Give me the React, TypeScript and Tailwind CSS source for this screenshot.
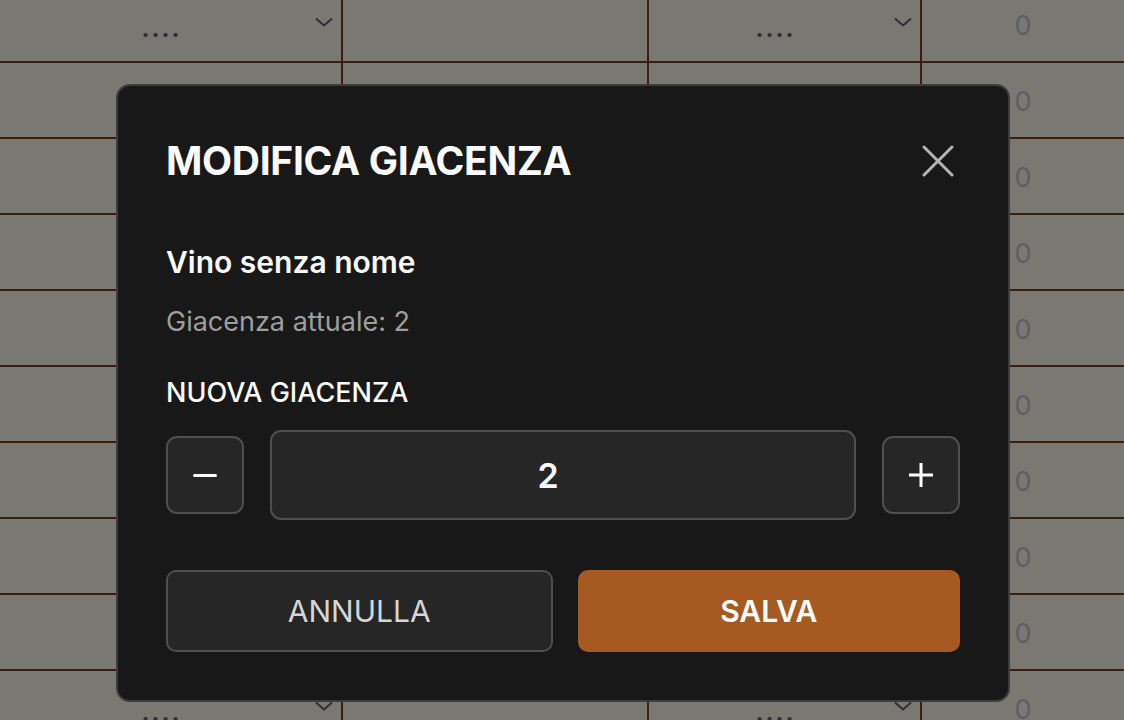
const rows = Array.from({ length: 10 });

const Chevron = () => (
  <svg width="18" height="10" viewBox="0 0 18 10" fill="none" className="shrink-0">
    <path d="M1 1.5 L9 8.5 L17 1.5" stroke="#2c2f37" strokeWidth="2" />
  </svg>
);

const SelectCell = ({ width }: { width: string }) => (
  <div className={`${width} h-full border-r-2 border-[#3d1e0e] flex items-center pl-2 pr-2`}>
    <div className="flex-1 text-center text-[24px] font-bold tracking-[2px] text-[#2c2f37] leading-none pt-[10px]">
      ....
    </div>
    <div className="-mt-[4px]">
      <Chevron />
    </div>
  </div>
);

const StockModal = () => {
  return (
    <div
      className="absolute left-[116px] top-[84px] w-[894px] h-[618px] rounded-[14px] border-2 border-[#3d3d3d] bg-[#181818] px-[48px] pt-[51px]"
      style={{ fontFamily: "Inter, 'Noto Sans', sans-serif" }}
    >
      <div className="flex items-center justify-between">
        <h2 className="text-[39px] leading-[48px] font-bold text-[#fafafa] tracking-[-0.3px]">
          MODIFICA GIACENZA
        </h2>
        <button className="mr-[6px] flex items-center justify-center">
          <svg width="32" height="32" viewBox="0 0 32 32" fill="none">
            <path d="M2 2 L30 30 M30 2 L2 30" stroke="#b5b5b5" strokeWidth="3" strokeLinecap="round" />
          </svg>
        </button>
      </div>

      <h3 className="mt-[59px] text-[30px] leading-[36px] font-semibold text-[#fafafa]">
        Vino senza nome
      </h3>
      <p className="mt-[26px] text-[27px] leading-[32px] text-[#9e9e9e]">
        Giacenza attuale: 2
      </p>

      <label className="block mt-[39px] text-[27px] leading-[32px] font-medium text-[#fafafa]">
        NUOVA GIACENZA
      </label>
      <div className="mt-[21px] flex items-center gap-[26px] h-[90px]">
        <button className="w-[78px] h-[78px] shrink-0 rounded-[11px] border-2 border-[#4f4f4f] bg-[#262626] flex items-center justify-center">
          <span className="block w-[24px] h-[3px] bg-white rounded-sm" />
        </button>
        <div className="flex-1 h-[90px] rounded-[11px] border-2 border-[#4f4f4f] bg-[#262626] flex items-center justify-center pr-[30px] text-[34px] font-semibold text-[#fafafa]">
          2
        </div>
        <button className="w-[78px] h-[78px] shrink-0 rounded-[11px] border-2 border-[#4f4f4f] bg-[#262626] flex items-center justify-center">
          <svg width="26" height="26" viewBox="0 0 26 26">
            <path d="M1 13 H25 M13 1 V25" stroke="white" strokeWidth="3" />
          </svg>
        </button>
      </div>

      <div className="mt-[50px] flex gap-[25px]">
        <button className="flex-1 h-[82px] rounded-[10px] border-2 border-[#4f4f4f] bg-[#262626] text-[30px] font-normal text-[#d6d6d6]">
          ANNULLA
        </button>
        <button className="flex-1 h-[82px] rounded-[10px] bg-[#a65a22] text-[30px] font-semibold text-white">
          SALVA
        </button>
      </div>
    </div>
  );
};

export default function App() {
  return (
    <div
      className="relative w-full h-[720px] overflow-hidden bg-[#7a7872]"
      style={{ fontFamily: "Inter, 'Noto Sans', sans-serif" }}
    >
      <div className="-mt-[13px] flex flex-col">
        {rows.map((_, i) => (
          <div key={i} className="flex h-[76px] shrink-0 border-b-2 border-[#3d1e0e]">
            <SelectCell width="w-[343px]" />
            <div className="w-[306px] h-full border-r-2 border-[#3d1e0e]" />
            <SelectCell width="w-[273px]" />
            <div className="flex-1 h-full flex items-center justify-center pt-1 text-[27px] text-[#5d5f66]">
              0
            </div>
          </div>
        ))}
      </div>
      <StockModal />
    </div>
  );
}
